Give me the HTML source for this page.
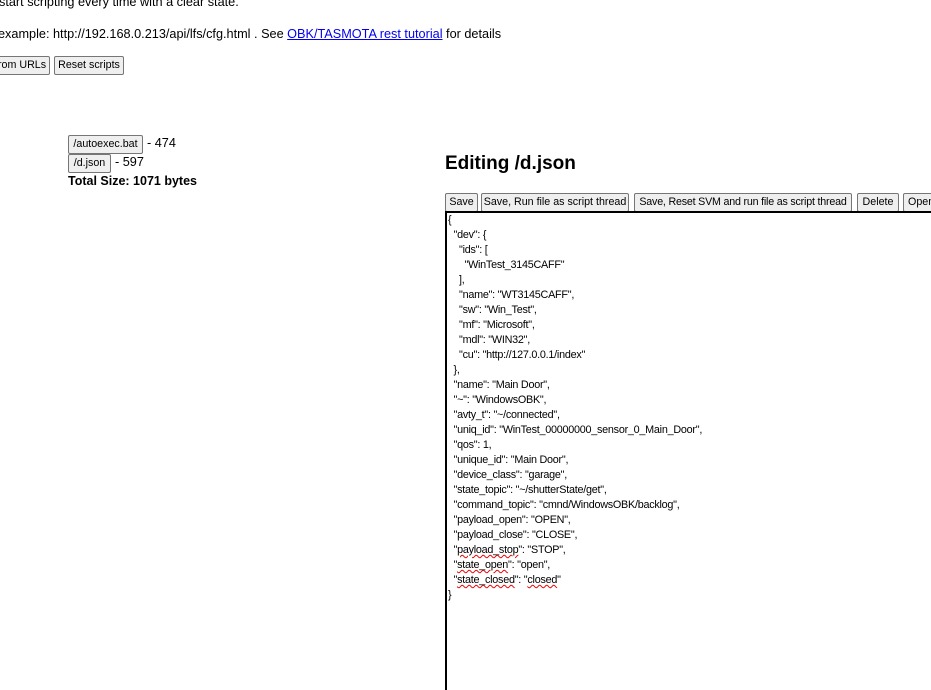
<!DOCTYPE html>
<html><head><meta charset="utf-8"><style>
*{margin:0;padding:0;box-sizing:border-box}
html,body{width:931px;height:690px;overflow:hidden;background:#fff;font-family:"Liberation Sans",sans-serif;font-size:12.7px;color:#000}
.a{position:absolute;white-space:nowrap}
.btn{position:absolute;height:19px;border:1px solid #767676;background:#efefef;font-size:10.7px;line-height:17px;text-align:center;overflow:hidden;white-space:nowrap;border-radius:2px}
a{color:#0000ee}
pre{position:absolute;left:448px;top:213px;font-family:"Liberation Sans",sans-serif;font-size:10.8px;letter-spacing:-0.25px;line-height:15px;color:#000}
.sq{text-decoration:underline wavy #e00;text-decoration-thickness:1px}
</style></head><body>
<div class="a" style="left:-1px;top:-5px">start scripting every time with a clear state.</div>
<div class="a" style="left:-2px;top:27px">example: http://192.168.0.213/api/lfs/cfg.html . See <a href="#">OBK/TASMOTA rest tutorial</a> for details</div>
<div class="btn" style="left:-6px;top:56px;width:56px;text-align:right;padding-right:4px">from URLs</div>
<div class="btn" style="left:54px;top:56px;width:70px">Reset scripts</div>
<div class="btn" style="left:68px;top:135px;width:75px">/autoexec.bat</div>
<div class="a" style="left:147px;top:136px">- 474</div>
<div class="btn" style="left:68px;top:154px;width:43px">/d.json</div>
<div class="a" style="left:115px;top:155px">- 597</div>
<div class="a" style="left:68px;top:174px;font-weight:bold;font-size:12.5px">Total Size: 1071 bytes</div>
<div class="a" style="left:445px;top:153px;font-size:19px;font-weight:bold">Editing /d.json</div>
<div class="btn" style="left:445px;top:193px;width:33px">Save</div>
<div class="btn" style="left:481px;top:193px;width:148px">Save, Run file as script thread</div>
<div class="btn" style="left:634px;top:193px;width:218px;letter-spacing:-0.2px">Save, Reset SVM and run file as script thread</div>
<div class="btn" style="left:857px;top:193px;width:42px">Delete</div>
<div class="btn" style="left:903px;top:193px;width:40px;text-align:left;padding-left:4px">Open</div>
<div style="position:absolute;left:445px;top:211px;width:500px;height:479px;border:2px solid #000;border-bottom:none"></div>
<pre>{
  "dev": {
    "ids": [
      "WinTest_3145CAFF"
    ],
    "name": "WT3145CAFF",
    "sw": "Win_Test",
    "mf": "Microsoft",
    "mdl": "WIN32",
    "cu": "http://127.0.0.1/index"
  },
  "name": "Main Door",
  "~": "WindowsOBK",
  "avty_t": "~/connected",
  "uniq_id": "WinTest_00000000_sensor_0_Main_Door",
  "qos": 1,
  "unique_id": "Main Door",
  "device_class": "garage",
  "state_topic": "~/shutterState/get",
  "command_topic": "cmnd/WindowsOBK/backlog",
  "payload_open": "OPEN",
  "payload_close": "CLOSE",
  "<span class="sq">payload_stop</span>": "STOP",
  "<span class="sq">state_open</span>": "open",
  "<span class="sq">state_closed</span>": "<span class="sq">closed</span>"
}</pre>
</body></html>
